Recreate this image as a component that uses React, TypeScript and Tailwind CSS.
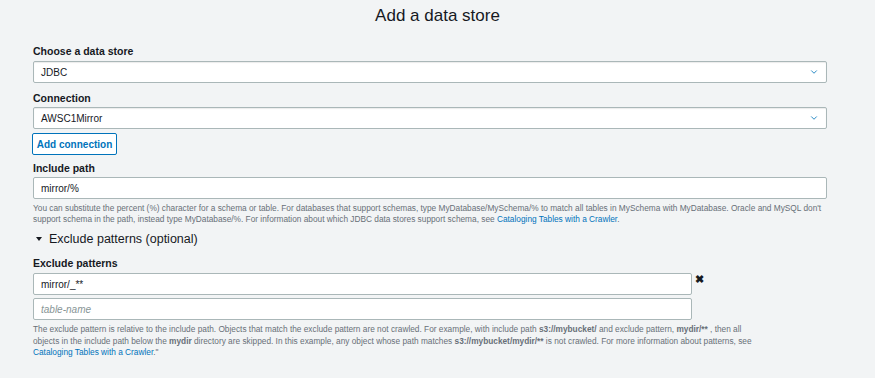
import { ChevronDown } from 'lucide-react';

const font = { fontFamily: '"Liberation Sans", Arial, sans-serif' };

function Select({ value }: { value: string }) {
  return (
    <div className="flex h-[22px] items-center justify-between rounded-[2px] border border-[#aab7b8] bg-white pl-[7px] pr-[7px] shadow-[inset_0_1px_1px_rgba(0,0,0,0.08)]">
      <span className="text-[10px] text-[#16191f]">{value}</span>
      <ChevronDown size={10} strokeWidth={2} className="text-[#0073bb]" />
    </div>
  );
}

function Label({ children, className = '' }: { children: React.ReactNode; className?: string }) {
  return <div className={`text-[10.5px] font-bold leading-[14px] text-[#16191f] ${className}`}>{children}</div>;
}

function Input({ value, placeholder }: { value?: string; placeholder?: string }) {
  return (
    <div className="flex h-[22px] items-center rounded-[2px] border border-[#aab7b8] bg-white pl-[7px]">
      {value ? (
        <span className="text-[10px] text-[#16191f]">{value}</span>
      ) : (
        <span className="text-[10px] italic text-[#879596]">{placeholder}</span>
      )}
    </div>
  );
}

const Link = ({ children }: { children: React.ReactNode }) => (
  <a className="text-[#0073bb]">{children}</a>
);

export default function App() {
  return (
    <div className="min-h-[378px] w-[875px] bg-[#f2f4f5] pl-[33px] pr-[48px] pt-[5px]" style={font}>
      <h1 className="ml-[-33px] mr-[-48px] text-center text-[17px] leading-[22px] text-[#16191f]">Add a data store</h1>

      <Label className="mt-[17px]">Choose a data store</Label>
      <div className="mt-[3px]">
        <Select value="JDBC" />
      </div>

      <Label className="mt-[8px]">Connection</Label>
      <div className="mt-[2px]">
        <Select value="AWSC1Mirror" />
      </div>

      <button className="mt-[4px] ml-[-1px] flex h-[22px] w-[85px] items-center justify-center rounded-[2px] border border-[#0073bb] bg-white text-[10px] font-bold text-[#0073bb]">
        Add connection
      </button>

      <Label className="mt-[6px]">Include path</Label>
      <div className="mt-[2px]">
        <Input value="mirror/%" />
      </div>
      <p className="mt-[4px] text-[8.3px] leading-[11px] text-[#687078]">
        You can substitute the percent (%) character for a schema or table. For databases that support schemas, type MyDatabase/MySchema/% to match all tables in MySchema with MyDatabase. Oracle and MySQL don't support schema in the path, instead type MyDatabase/%. For information about which JDBC data stores support schema, see <Link>Cataloging Tables with a Crawler</Link>.
      </p>

      <div className="mt-[6px] flex items-center leading-[16px] text-[#16191f]">
        <span className="ml-[3px] mr-[7px] h-0 w-0 border-l-[3.5px] border-r-[3.5px] border-t-[4px] border-l-transparent border-r-transparent border-t-[#16191f]" />
        <span className="text-[12.5px]">Exclude patterns (optional)</span>
      </div>

      <Label className="mt-[9px]">Exclude patterns</Label>
      <div className="mt-[3px] flex items-start">
        <div className="w-[659px]">
          <Input value="mirror/_**" />
        </div>
        <span className="ml-[3px] mt-[1px] text-[11px] font-bold leading-[11px] text-[#16191f]">✖</span>
      </div>
      <div className="mt-[3px] w-[659px]">
        <Input placeholder="table-name" />
      </div>
      <p className="mt-[4px] w-[722px] text-[8.3px] leading-[11.5px] text-[#687078]">
        The exclude pattern is relative to the include path. Objects that match the exclude pattern are not crawled. For example, with include path <b>s3://mybucket/</b> and exclude pattern, <b>mydir/**</b> , then all objects in the include path below the <b>mydir</b> directory are skipped. In this example, any object whose path matches <b>s3://mybucket/mydir/**</b> is not crawled. For more information about patterns, see <Link>Cataloging Tables with a Crawler</Link>."
      </p>
    </div>
  );
}
